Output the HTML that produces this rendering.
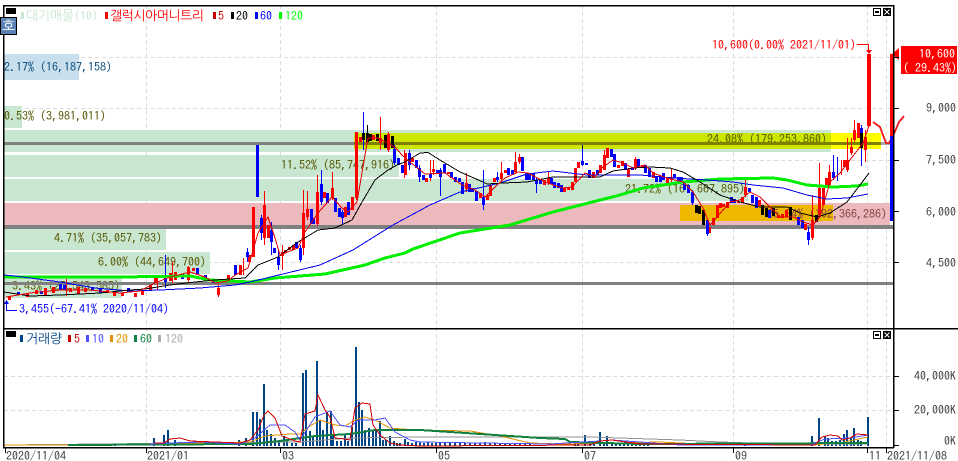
<!DOCTYPE html>
<html><head><meta charset="utf-8"><style>
html,body{margin:0;padding:0;background:#fff;width:958px;height:461px;overflow:hidden}
svg{display:block}
text{font-family:"IPAGothic","NanumGothic","Liberation Mono",monospace;font-size:12px;white-space:pre}
.k{font-family:"NanumGothic","Noto Sans CJK KR",sans-serif;font-size:13px}
</style></head><body>
<svg width="958" height="461" viewBox="0 0 958 461" xmlns="http://www.w3.org/2000/svg">
<rect width="958" height="461" fill="#fff"/>
<g stroke="#dcdcdc" stroke-dasharray="4 3" fill="none">
<path d="M4 57.5H893M4 108.5H893M4 160.5H893M4 211.5H893M4 262.5H893M4 376.5H893M4 410.5H893"/>
<path d="M146.500 5V447M280.500 5V447M436.500 5V447M582.500 5V447M733.500 5V447M867.500 5V447M886.500 5V447"/>
</g>
<g shape-rendering="crispEdges">
<rect x="4" y="54" width="75" height="26" fill="#c8e0ee"/>
<rect x="4" y="106" width="18" height="22" fill="#c8e6d0"/>
<rect x="4" y="130" width="827" height="22" fill="#c8e6d0"/>
<rect x="4" y="155" width="395" height="22" fill="#c8e6d0"/>
<rect x="4" y="179" width="744" height="22" fill="#c8e6d0"/>
<rect x="4" y="203" width="886" height="22" fill="#ecb9bc"/>
<rect x="4" y="228" width="162" height="22" fill="#c8e6d0"/>
<rect x="4" y="252" width="206" height="22" fill="#c8e6d0"/>
<rect x="4" y="277" width="118" height="21" fill="#c8e6d0"/>
<rect x="831" y="133" width="50" height="16" fill="#ffff00"/>
<rect x="354" y="133" width="477" height="16" fill="#cce600"/>
<rect x="680" y="205" width="153" height="16" fill="#eeb700"/>
</g>
<g fill="#555500">
<text x="4" y="71" fill="#0a4a7a">2.17% (16,187,158)</text>
<text x="4" y="120">0.53% (3,981,011)</text>
<text x="707" y="143">24.08% (179,253,860)</text>
<text x="281" y="169">11.52% (85,747,916)</text>
<text x="625" y="193">21.72% (161,667,895)</text>
<text x="767" y="218" fill="#804040">25.84% (192,366,286)</text>
<text x="54" y="242">4.71% (35,057,783)</text>
<text x="98" y="266">6.00% (44,649,700)</text>
<text x="12" y="290">3.43% (25,543,585)</text>
</g>
<g shape-rendering="crispEdges">
<rect x="4" y="142" width="889" height="3" fill="#808080"/>
<rect x="354" y="142" width="527" height="3" fill="#808000"/>
<rect x="881" y="142" width="12" height="3" fill="#a8a8a8"/>
<rect x="4" y="225" width="889" height="4" fill="#808080"/>
<rect x="4" y="282" width="889" height="3" fill="#808080"/>
<rect x="256" y="145" width="3" height="52" fill="#0000ff"/>
</g>
<!-- wicks -->
<g shape-rendering="crispEdges" stroke-width="1" fill="none">
<path stroke="#ff0000" d="M66.500 279V296M157.500 276V290M172.500 262V283M188.500 266V282M218.500 284V297M243.500 258V275M264.500 191V245M282.500 245V270M303.500 190V255M307.500 191V220M317.500 175V226M332.500 172V200M356.500 132V200M380.500 117V150M388.500 132V152M404.500 150V178M430.500 160V181M433.500 160V175M466.500 173V192M501.500 162V182M515.500 152V174M519.500 154V164M548.500 172V185M604.500 150V170M635.500 157V170M671.500 168V182M745.500 178V197M812.500 195V240M819.500 163V218M829.500 165V188M847.500 138V172M851.500 138V155M854.500 120V142M865.500 130V162M841.500 160V175"/>
<path stroke="#0000ff" d="M165.500 255V288M247.500 248V262M261.500 215V240M271.500 222V255M278.500 250V270M300.500 245V262M321.500 170V205M342.500 210V224M363.500 112V150M394.500 145V165M409.500 150V170M419.500 165V182M440.500 168V196M483.500 170V210M497.500 172V182M536.500 178V193M582.500 145V166M692.500 190V205M707.500 220V236M808.500 227V245M833.500 155V180M837.500 157V181M861.500 125V166"/>
</g>
<!-- bodies -->
<g shape-rendering="crispEdges" fill="none" stroke-width="3">
<path stroke="#ff0000" d="M9.500 296V300M27.500 293V297M36.500 290V294M45.500 288V295M53.500 287V293M70.500 288V292M78.500 287V294M85.500 288V292M107.500 290V293M114.500 291V296M122.500 293V296M135.500 293V297M142.500 291V295M150.500 285V291M155.500 278V283M170.500 273V281M175.500 272V280M188.500 267V280M193.500 268V271M218.500 288V295M228.500 275V280M240.500 265V275M249.500 255V262M253.500 207V257M264.500 205V238M268.500 225V238M282.500 252V256M285.500 250V253M289.500 247V250M293.500 245V250M303.500 213V248M307.500 209V217M317.500 192V224M324.500 192V198M332.500 188V198M345.500 207V217M352.500 197V210M356.500 132V198M360.500 137V142M373.500 135V140M380.500 138V143M388.500 134V150M405.500 153V175M412.500 158V162M426.500 178V182M433.500 169V172M448.500 172V174M466.500 183V189M480.500 193V198M487.500 195V200M490.500 185V196M494.500 178V182M501.500 173V179M505.500 170V173M515.500 162V172M519.500 157V162M544.500 180V185M548.500 178V183M564.500 188V192M568.500 187V190M572.500 182V190M575.500 168V182M578.500 162V168M593.500 172V178M600.500 165V173M604.500 155V170M607.500 148V158M618.500 165V168M622.500 161V166M628.500 169V177M635.500 159V168M642.500 165V168M653.500 172V178M667.500 178V183M671.500 177V180M709.500 227V233M713.500 218V225M717.500 205V218M720.500 203V208M723.500 204V207M727.500 202V208M738.500 202V203M742.500 197V203M745.500 187V195M759.500 200V206M778.500 215V218M782.500 214V218M786.500 210V217M805.500 224V230M812.500 220V238M819.500 188V215M823.500 188V205M826.500 178V185M829.500 172V185M844.500 160V167M847.500 160V170M851.500 147V153M854.500 130V140M858.500 123V138M865.500 137V150"/>
<path stroke="#0000ff" d="M18.500 292V295M41.500 291V294M60.500 284V290M64.500 285V290M92.500 287V290M100.500 289V293M128.500 288V292M165.500 277V282M182.500 274V279M197.500 268V274M205.500 275V281M213.500 280V283M235.500 265V275M247.500 252V257M261.500 218V233M271.500 230V242M274.500 248V253M278.500 257V265M296.500 242V248M300.500 248V260M311.500 209V224M313.500 218V224M321.500 184V202M327.500 193V203M335.500 198V212M339.500 208V217M342.500 212V218M348.500 202V215M394.500 149V163M398.500 158V165M402.500 165V173M409.500 153V165M416.500 160V168M419.500 168V177M423.500 175V180M430.500 174V178M437.500 170V174M440.500 170V177M444.500 164V173M451.500 172V178M455.500 177V182M459.500 178V182M462.500 182V194M469.500 184V192M472.500 188V192M476.500 191V201M483.500 197V205M497.500 177V180M508.500 168V175M512.500 170V175M522.500 157V171M526.500 173V180M529.500 173V180M533.500 173V180M536.500 180V184M540.500 180V184M551.500 178V184M554.500 182V188M558.500 183V188M561.500 185V192M582.500 161V165M586.500 163V165M589.500 170V178M597.500 170V175M611.500 149V157M614.500 154V167M625.500 163V170M632.500 167V170M638.500 159V168M645.500 165V173M649.500 168V177M656.500 177V182M660.500 176V182M663.500 173V180M674.500 174V178M678.500 177V183M681.500 177V183M684.500 183V190M688.500 185V193M692.500 192V203M707.500 220V234M731.500 197V203M734.500 199V203M749.500 188V192M752.500 195V203M756.500 197V208M769.500 210V218M798.500 217V225M802.500 220V228M808.500 232V240M833.500 172V178M861.500 128V133"/>
<path stroke="#000000" d="M363.500 133V140M367.500 133V142M370.500 134V141M377.500 134V141M385.500 135V148M392.500 136V148M696.500 205V213M699.500 206V214M703.500 210V225M762.500 205V215M766.500 208V217M773.500 208V216M790.500 207V220M816.500 215V222M861.500 133V148"/>
<path stroke="#ff0000" stroke-width="4" d="M869 54V126"/>
</g>
<path shape-rendering="crispEdges" fill="#000" d="M367 125h1v8h-1zM582 145h1v3h-1z"/>
<!-- moving averages -->
<g fill="none" stroke-linejoin="round" shape-rendering="crispEdges">
<polyline stroke="#00ee00" stroke-width="3" points="4,277 60,277 120,277 190,276 210,280 250,282 275,278 325,274 365,265 385,258 405,253 413,249 460,233 510,225 553,212 620,195 643,188 683,182 720,179 773,178 787,180 807,185 833,187 857,186 868,184"/>
<polyline stroke="#0000ee" stroke-width="1" points="4,275 15,276 30,278 60,282 95,288 130,291 160,290 200,288 235,285 250,282 287,273 320,265 353,250 393,225 430,205 460,192 483,187 500,183 527,174 553,171 587,175 640,175 673,178 707,180 733,182 753,185 783,188 807,195 827,199 847,198 868,194"/>
<polyline stroke="#000" stroke-width="1" points="4,292 30,296 60,295 100,293 130,290 145,289 170,285 195,282 215,280 245,278 258,265 278,257 298,242 318,230 335,228 352,220 362,202 375,180 388,170 397,165 405,162 420,153 428,152.500 440,160 460,172 483,182 487,184 503,183 527,182 553,177 587,177 600,177 613,171 633,168 650,167 670,168 683,172 700,182 720,195 740,202 760,207 787,207 800,213 817,217 830,213 847,202 860,185 869,173"/>
<polyline stroke="#e00000" stroke-width="1" points="6,297 30,293 60,290 90,290 120,293 140,291 155,283 170,277 190,272 205,277 215,283 228,281 235,275 248,268 258,233 268,217 275,238 280,255 298,248 305,232 318,213 332,197 342,208 348,212 357,202 365,155 368,138 378,138 395,147 402,155 410,162 425,174 445,173 462,185 475,190 485,197 495,187 505,178 518,172 528,173 545,182 562,188 572,187 585,173 595,177 603,167 613,160 623,163 633,168 645,165 653,173 667,178 683,182 693,192 703,208 710,225 717,217 730,202 740,200 750,192 760,197 770,207 780,217 793,217 803,222 813,225 820,217 830,182 840,173 850,160 863,143 869,126"/>
</g>
<!-- indicators -->
<path d="M873 122L880 127L886 143L889 143L893 136L899 122L904 116" fill="none" stroke="#f01818" stroke-width="1.800"/>
<g shape-rendering="crispEdges">
<rect x="890" y="54" width="3" height="82" fill="#ff0000"/>
<rect x="890" y="136" width="3" height="85" fill="#0000ff"/>
<rect x="901" y="46" width="56" height="28" fill="#ff0000"/>
</g>
<path d="M899 48V60L892 54Z" fill="#ff0000"/>
<text x="712" y="49" fill="#ff0000">10,600(0.00% 2021/11/01)</text>
<path d="M857 44.500H868.500V52" fill="none" stroke="#ff0000"/>
<path d="M866 50H872L869 54Z" fill="#ff0000"/>
<text x="919" y="58" fill="#fff">10,600</text>
<text x="903" y="72" fill="#fff">( 29.43%)</text>
<path d="M6.500 303V310.500H17" fill="none" stroke="#0000ff"/>
<path d="M4 304L6.500 300L9 304Z" fill="#0000ff"/>
<text x="19" y="313" fill="#0000ff">3,455(-67.41% 2020/11/04)</text>
<!-- volume -->
<path shape-rendering="crispEdges" fill="none" stroke="#004488" stroke-width="2" d="M115 445V446M154 438V446M164 435V446M168 430V446M175 440V446M239 440V446M246 438V446M253 412V446M257 412V446M260 419V446M264 384V446M267 430V446M271 434V446M275 438V446M279 441V446M284 436V446M287 441V446M292 443V446M296 443V446M303 373V446M306 370V446M310 431V446M313 436V446M317 361V446M320 420V446M323 430V446M327 412V446M331 411V446M333 436V446M337 441V446M341 441V446M345 435V446M348 441V446M352 427V446M356 347V446M359 402V446M362 410V446M365 430V446M369 428V446M373 431V446M376 430V446M380 421V446M383 440V446M386 440V446M390 436V446M394 441V446M397 443V446M400 443V446M405 439V446M408 442V446M412 443V446M416 442V446M420 442V446M424 443V446M428 442V446M432 443V446M436 443V446M440 443V446M445 442V446M450 443V446M455 443V446M460 442V446M465 443V446M470 443V446M475 443V446M480 443V446M485 442V446M490 443V446M495 443V446M500 444V446M505 444V446M510 444V446M515 444V446M520 444V446M525 444V446M530 444V446M575 443V446M578 443V446M585 435V446M590 444V446M594 444V446M600 432V446M604 442V446M607 436V446M612 443V446M616 443V446M620 443V446M624 443V446M628 443V446M632 444V446M636 444V446M640 444V446M644 444V446M648 444V446M745 443V446M812 436V446M819 418V446M825 436V446M828 438V446M832 441V446M836 441V446M840 440V446M844 434V446M847 430V446M851 438V446M854 428V446M858 440V446M861 441V446M868 417V446"/>
<g fill="none" stroke-width="1" shape-rendering="crispEdges">
<polyline stroke="#909090" points="4,445 300,442 350,438 420,437 540,437 590,437 680,440 720,442 780,444 868,444"/>
<polyline stroke="#e09000" points="4,445 68,445 150,445 170,444 205,443 250,442 265,436 290,434 300,434 310,426 320,420 335,425 345,426 355,420 365,417 375,420 390,428 402,429 420,430 470,431 500,436 530,443 560,444 620,443 660,442 700,444 810,445 840,443 868,437"/>
<polyline stroke="#108040" stroke-width="2" points="68,445 250,444 280,441 315,436 350,434 375,430 420,430 480,434 540,438 565,439 570,442 640,444 868,443"/>
<polyline stroke="#5050ff" points="150,444 170,443 200,442 240,444 255,438 270,425 285,425 295,432 300,440 315,417 330,411 340,425 350,427 358,420 375,420 385,418 395,432 410,440 420,442 480,443 550,444 600,441 612,440 640,442 680,445 810,445 825,439 850,438 868,435"/>
<polyline stroke="#d00000" points="154,443 164,443 170,439 180,438 190,441 240,443 250,440 258,430 264,415 268,411 275,418 282,436 295,441 300,442 305,414 315,411 318,395 325,410 330,417 335,438 345,439 350,440 355,408 362,403 370,404 373,425 380,435 390,443 400,445 420,446 590,445 600,441 612,440 640,444 815,445 822,437 830,435 838,436 842,440 850,438 857,434 868,435"/>
</g>
<!-- frame -->
<g shape-rendering="crispEdges">
<rect x="3" y="5" width="891" height="1.500" fill="#000"/>
<rect x="3" y="5" width="1.500" height="443" fill="#000"/>
<rect x="893" y="5" width="1.500" height="443" fill="#000"/>
<rect x="3" y="328" width="955" height="1.500" fill="#000"/>
<rect x="3" y="447" width="891" height="1.500" fill="#000"/>
<path stroke="#000" d="M893 57.500h6M893 108.500h6M893 160.500h6M893 211.500h6M893 262.500h6M893 376.500h6M893 410.500h6M893 445.500h6M5.500 448v5M146.500 448v5M280.500 448v5M436.500 448v5M582.500 448v5M733.500 448v5M867.500 448v5M886.500 448v5"/>
<rect x="6" y="8" width="10" height="6" fill="#000"/>
<rect x="0" y="17" width="17" height="18" fill="#000"/>
<rect x="1" y="18" width="15" height="16" fill="#5a82b5"/>
<rect x="21" y="12" width="3" height="7" fill="#c8e6d0"/>
<rect x="105" y="12" width="3" height="7" fill="#ff0000"/>
<rect x="213" y="12" width="3" height="7" fill="#c80000"/>
<rect x="231" y="12" width="3" height="7" fill="#000"/>
<rect x="255" y="12" width="3" height="7" fill="#0000ff"/>
<rect x="279" y="12" width="3" height="7" fill="#00ff00"/>
<rect x="873" y="8" width="8" height="8" fill="#000"/><rect x="874" y="9" width="6" height="6" fill="#fff"/><rect x="875" y="11" width="4" height="2" fill="#000"/>
<rect x="883" y="8" width="8" height="8" fill="#000"/>
<rect x="873" y="331" width="8" height="8" fill="#000"/><rect x="874" y="332" width="6" height="6" fill="#fff"/><rect x="875" y="334" width="4" height="2" fill="#000"/>
<rect x="883" y="331" width="8" height="8" fill="#000"/>
<rect x="6" y="331" width="10" height="6" fill="#000"/>
<rect x="20" y="335" width="3" height="7" fill="#004488"/>
<rect x="68" y="335" width="3" height="7" fill="#c80000"/>
<rect x="86" y="335" width="3" height="7" fill="#5050ff"/>
<rect x="110" y="335" width="3" height="7" fill="#e09000"/>
<rect x="134" y="335" width="3" height="7" fill="#108040"/>
<rect x="158" y="335" width="3" height="7" fill="#aaaaaa"/>
</g>
<path d="M884.500 9.500l5 5M889.500 9.500l-5 5M884.500 332.500l5 5M889.500 332.500l-5 5" stroke="#fff" fill="none"/>
<text class="k" x="2" y="31" fill="#fff" style="font-size:14px">호</text>
<text class="k" x="26" y="20" fill="#c8e6d0" textLength="48" lengthAdjust="spacing">대기매물</text>
<text x="74" y="20" fill="#c8e6d0">(10)</text>
<text class="k" x="110" y="20" fill="#ff0000" textLength="94" lengthAdjust="spacing">갤럭시아머니트리</text>
<text x="218" y="20" fill="#c80000">5</text>
<text x="236" y="20" fill="#000">20</text>
<text x="260" y="20" fill="#0000ff">60</text>
<text x="285" y="20" fill="#00ff00">120</text>
<text class="k" x="26" y="343" fill="#004488" textLength="36" lengthAdjust="spacing">거래량</text>
<text x="74" y="343" fill="#c80000">5</text>
<text x="92" y="343" fill="#5050ff">10</text>
<text x="116" y="343" fill="#e09000">20</text>
<text x="140" y="343" fill="#108040">60</text>
<text x="165" y="343" fill="#aaaaaa">120</text>
<g fill="#404040">
<text x="926" y="112">9,000</text>
<text x="926" y="164">7,500</text>
<text x="926" y="216">6,000</text>
<text x="926" y="267">4,500</text>
<text x="914" y="380">40,000K</text>
<text x="914" y="414">20,000K</text>
<text x="944" y="445">0K</text>
<text x="6" y="460">2020/11/04</text>
<text x="147" y="460">2021/01</text>
<text x="282" y="460">03</text>
<text x="438" y="460">05</text>
<text x="584" y="460">07</text>
<text x="735" y="460">09</text>
<text x="869" y="460">11</text>
<text x="887" y="460">2021/11/08</text>
</g>
</svg>
</body></html>
